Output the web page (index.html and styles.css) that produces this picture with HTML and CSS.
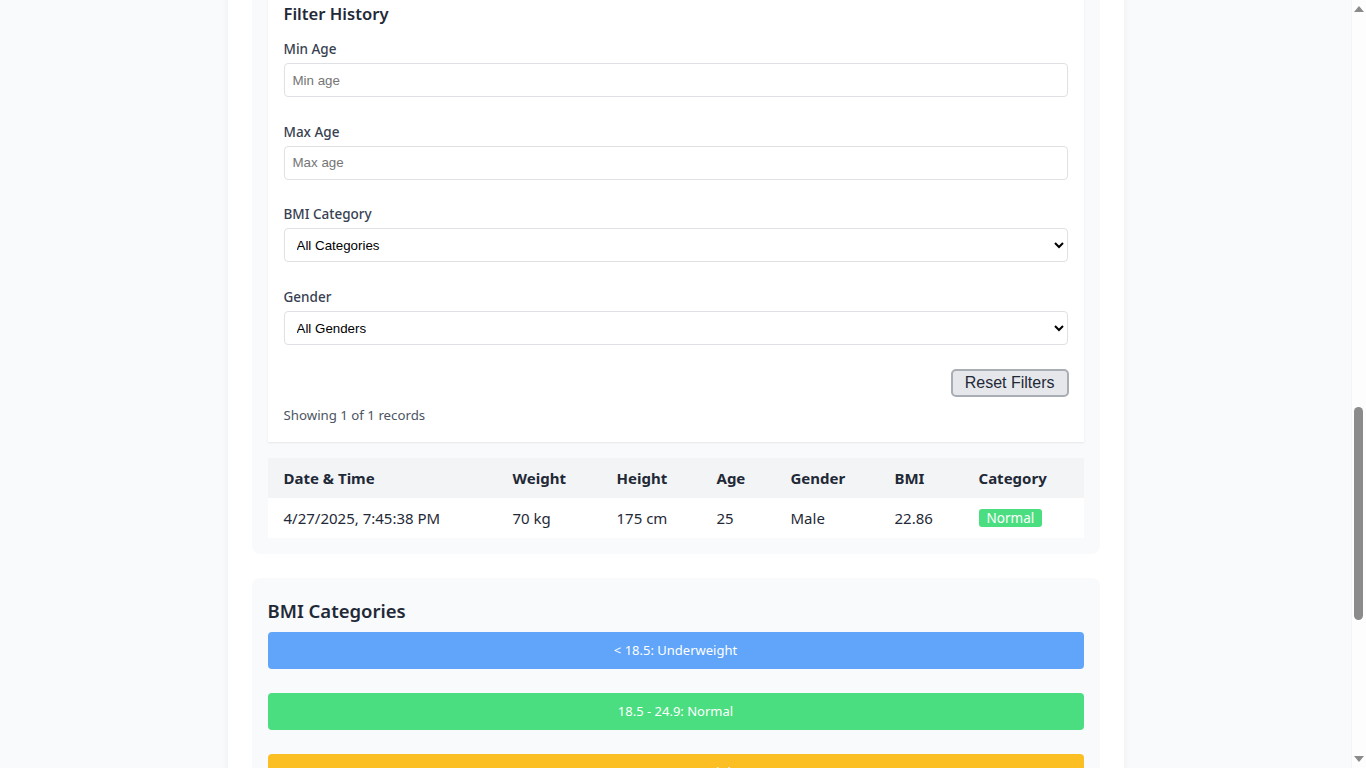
FILE: index.html
```html
<!DOCTYPE html>
<html lang="en">
<head>
<meta charset="utf-8">
<title>BMI Calculator</title>
<link rel="stylesheet" href="styles.css">
</head>
<body>
<div class="app">
  <header class="app-header">
    <h1>BMI Calculator</h1>
    <p>Track your Body Mass Index over time</p>
  </header>

  <section class="card">
    <h2 class="card-title">Calculate Your BMI</h2>
    <div class="form-grid">
      <div class="field"><label>Weight (kg)</label><input class="control" type="number" value="70"></div>
      <div class="field"><label>Height (cm)</label><input class="control" type="number" value="175"></div>
      <div class="field"><label>Age</label><input class="control" type="number" value="25"></div>
      <div class="field"><label>Gender</label><select class="control"><option>Male</option><option>Female</option></select></div>
    </div>
    <button class="btn-primary">Calculate BMI</button>
  </section>

  <section class="card">
    <h2 class="card-title">Your Result</h2>
    <div class="result">
      <div class="result-value">22.86</div>
      <span class="badge badge-normal">Normal</span>
      <p class="result-note">Your BMI is within the healthy range. Keep up a balanced diet and regular exercise.</p>
    </div>
  </section>

  <section class="card">
    <h2 class="card-title">BMI Trend</h2>
    <div class="chart">
      <svg width="100%" height="100%" viewBox="0 0 800 420" preserveAspectRatio="none">
        <line x1="40" y1="20" x2="40" y2="390" stroke="#d1d5db"/>
        <line x1="40" y1="390" x2="790" y2="390" stroke="#d1d5db"/>
        <line x1="40" y1="300" x2="790" y2="300" stroke="#eef0f3"/>
        <line x1="40" y1="210" x2="790" y2="210" stroke="#eef0f3"/>
        <line x1="40" y1="120" x2="790" y2="120" stroke="#eef0f3"/>
        <circle cx="415" cy="205" r="5" fill="#3b82f6"/>
      </svg>
    </div>
  </section>

  <section class="card">
    <div class="history-head">
      <h2 class="card-title">BMI History</h2>
    </div>

    <div class="filter-panel">
      <h3 class="filter-title">Filter History</h3>
      <div class="filter-fields">
        <div class="field">
          <label for="min-age">Min Age</label>
          <input id="min-age" class="control" type="number" placeholder="Min age">
        </div>
        <div class="field">
          <label for="max-age">Max Age</label>
          <input id="max-age" class="control" type="number" placeholder="Max age">
        </div>
        <div class="field">
          <label for="cat">BMI Category</label>
          <select id="cat" class="control select">
            <option>All Categories</option>
            <option>Underweight</option>
            <option>Normal</option>
            <option>Overweight</option>
            <option>Obese</option>
          </select>
        </div>
        <div class="field">
          <label for="gen">Gender</label>
          <select id="gen" class="control select">
            <option>All Genders</option>
            <option>Male</option>
            <option>Female</option>
          </select>
        </div>
      </div>
      <div class="filter-actions">
        <button class="btn-reset">Reset Filters</button>
      </div>
      <p class="filter-count">Showing 1 of 1 records</p>
    </div>

    <table class="history-table">
      <colgroup>
        <col class="c-date"><col class="c-weight"><col class="c-height"><col class="c-age"><col class="c-gender"><col class="c-bmi"><col class="c-cat">
      </colgroup>
      <thead>
        <tr><th>Date &amp; Time</th><th>Weight</th><th>Height</th><th>Age</th><th>Gender</th><th>BMI</th><th>Category</th></tr>
      </thead>
      <tbody>
        <tr><td>4/27/2025, 7:45:38 PM</td><td>70 kg</td><td>175 cm</td><td>25</td><td>Male</td><td>22.86</td><td><span class="badge badge-normal">Normal</span></td></tr>
      </tbody>
    </table>
  </section>

  <section class="card">
    <h2 class="cat-title">BMI Categories</h2>
    <div class="cat-list">
      <div class="cat-bar cat-under">&lt; 18.5: Underweight</div>
      <div class="cat-bar cat-normal">18.5 - 24.9: Normal</div>
      <div class="cat-bar cat-over">25 - 29.9: Overweight</div>
      <div class="cat-bar cat-obese">≥ 30: Obese</div>
    </div>
  </section>

  <section class="card info">
    <h2 class="card-title">About BMI</h2>
    <p>Body Mass Index (BMI) is a simple measure that uses your height and weight to work out if your weight is healthy.</p>
    <p>BMI does not take into account muscle mass, bone density or overall body composition, so it should be used as a general guide only.</p>
  </section>
</div>

<div class="scrollbar" aria-hidden="true">
  <span class="sb-arrow sb-up"></span>
  <span class="sb-thumb"></span>
  <span class="sb-arrow sb-down"></span>
</div>
<script src="script.js"></script>
</body>
</html>
```

FILE: styles.css
```css
* { box-sizing: border-box; }

html { background: #f9fafb; }

body {
  margin: 0;
  padding: 32px 15px 28px 0;
  background: #f9fafb;
  color: #1f2937;
  font-family: "Noto Sans", "Segoe UI", sans-serif;
}

/* window scrollbar (drawn, since the capture hides the native one) */
.scrollbar {
  position: fixed;
  top: 0;
  right: 0;
  width: 15px;
  height: 100vh;
  background: #fdfdfd;
  border-left: 1px solid #f3f4f5;
}
.sb-arrow {
  position: absolute;
  left: 1.5px;
  width: 0;
  height: 0;
  border-left: 5.5px solid transparent;
  border-right: 5.5px solid transparent;
}
.sb-up { top: 6px; border-bottom: 6px solid #8b8b8b; }
.sb-down { bottom: 6px; border-top: 6px solid #8b8b8b; }
.sb-thumb {
  position: absolute;
  top: 407px;
  left: 2px;
  width: 9px;
  height: 213px;
  border-radius: 5px;
  background: #8b8b8b;
}

.app {
  width: 896px;
  margin: 0 auto;
  padding: 24px;
  background: #fff;
  box-shadow: 0 0 6px rgba(0, 0, 0, 0.06);
  border-radius: 8px;
}

.app-header { text-align: center; margin-bottom: 24px; }
.app-header h1 { margin: 0 0 4px; font-size: 30px; line-height: 36px; font-weight: 700; }
.app-header p { margin: 0; font-size: 16px; color: #4b5563; }

.card {
  background: #f9fafb;
  border-radius: 8px;
  padding: 16px;
  margin-bottom: 24px;
}
.card:last-child { margin-bottom: 0; }

.card-title {
  margin: 0 0 16px;
  font-size: 19px;
  line-height: 28px;
  font-weight: 600;
}

.form-grid {
  display: grid;
  grid-template-columns: 1fr 1fr;
  gap: 16px;
  margin-bottom: 16px;
}

.btn-primary {
  width: 100%;
  padding: 10px;
  border: 0;
  border-radius: 6px;
  background: #3b82f6;
  color: #fff;
  font: 600 15px "Noto Sans", sans-serif;
}

.result { text-align: center; }
.result-value { font-size: 48px; line-height: 60px; font-weight: 700; }
.result-note { margin: 12px 0 0; color: #4b5563; }

.chart { height: 520px; background: #fff; border-radius: 6px; }

.filter-panel {
  background: #fff;
  padding: 16px 16px 17px;
  box-shadow: 0 1px 2px rgba(0, 0, 0, 0.08);
  margin-bottom: 16px;
}

.filter-title {
  margin: 0 0 11px;
  font-size: 16.6px;
  line-height: 28px;
  font-weight: 600;
  color: #1f2937;
}

.filter-fields {
  display: flex;
  flex-direction: column;
  gap: 24.7px;
  margin-bottom: 24px;
}

.field label {
  display: block;
  margin-bottom: 4px;
  font-size: 13.5px;
  line-height: 20px;
  font-weight: 500;
  color: #374151;
}

.control {
  display: block;
  width: 100%;
  height: 34px;
  padding: 0 8px;
  border: 1px solid #dfe1e5;
  border-radius: 4px;
  background: #fff;
  color: #000;
  font-family: "Liberation Sans", Arial, sans-serif;
  font-size: 13.333px;
}
.control::placeholder { color: #757575; }
.select { padding-left: 8px; }

.filter-actions {
  display: flex;
  justify-content: flex-end;
  margin-bottom: 8px;
  margin-right: -1px;
}

.btn-reset {
  height: 28px;
  padding: 0 12px;
  border: 2px solid #a9adb4;
  border-radius: 5px;
  background: #e5e7eb;
  color: #1f2937;
  font-family: "Liberation Sans", Arial, sans-serif;
  font-size: 16px;
}

.filter-count {
  margin: 0;
  font-size: 13.25px;
  line-height: 20px;
  color: #4b5563;
}

.history-table {
  width: 100%;
  border-collapse: collapse;
  table-layout: fixed;
  background: #fff;
}
.c-date { width: 229px; }
.c-weight { width: 104px; }
.c-height { width: 100px; }
.c-age { width: 74px; }
.c-gender { width: 104px; }
.c-bmi { width: 84px; }
.c-cat { width: 121px; }

.history-table th,
.history-table td {
  padding: 8px 16px;
  font-size: 15px;
  line-height: 24px;
  text-align: left;
  white-space: nowrap;
}
.history-table th {
  background: #f3f4f6;
  font-weight: 700;
  color: #1f2937;
}
.history-table td { color: #1f2937; }

.badge {
  display: inline-block;
  padding: 0 8px;
  border-radius: 3px;
  font-size: 13.5px;
  line-height: 18px;
  color: #fff;
  vertical-align: 1px;
}
.badge-normal { background: #4ade80; }

.cat-title {
  margin: 0 0 7px;
  padding-top: 2.5px;
  font-size: 18.5px;
  line-height: 28px;
  font-weight: 600;
  color: #1f2937;
}

.cat-list {
  display: flex;
  flex-direction: column;
  gap: 24px;
}

.cat-bar {
  padding: 8px;
  border-radius: 4px;
  font-size: 13px;
  line-height: 21.3px;
  text-align: center;
  color: #fff;
}
.cat-under { background: #60a5fa; }
.cat-normal { background: #4ade80; }
.cat-over { background: #fbbf24; }
.cat-obese { background: #f87171; }

.info { min-height: 300px; }
.info p { margin: 0 0 12px; font-size: 15px; line-height: 26px; color: #4b5563; }
```

FILE: script.js
```js
(function () {
  function align() {
    var t = document.querySelector('.filter-title');
    if (!t) return;
    var y = t.getBoundingClientRect().top + window.pageYOffset;
    window.scrollTo(0, Math.round(y));
  }
  align();
  window.addEventListener('load', align);
})();
```
